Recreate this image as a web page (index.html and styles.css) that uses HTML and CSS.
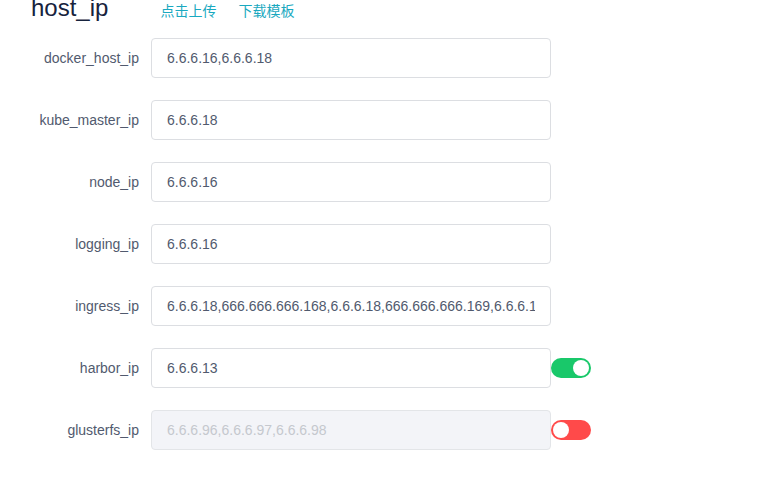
FILE: index.html
```html
<!DOCTYPE html>
<html lang="zh">
<head>
<meta charset="utf-8">
<title>host_ip</title>
<link rel="stylesheet" href="styles.css">
</head>
<body>
<div class="page">
  <div class="header">
    <h2 class="title">host_ip</h2>
    <div class="links">
      <a class="link" href="#">点击上传</a>
      <a class="link" href="#">下载模板</a>
    </div>
  </div>
  <form class="form">
    <div class="row">
      <label class="label">docker_host_ip</label>
      <input class="input" type="text" value="6.6.6.16,6.6.6.18">
    </div>
    <div class="row">
      <label class="label">kube_master_ip</label>
      <input class="input" type="text" value="6.6.6.18">
    </div>
    <div class="row">
      <label class="label">node_ip</label>
      <input class="input" type="text" value="6.6.6.16">
    </div>
    <div class="row">
      <label class="label">logging_ip</label>
      <input class="input" type="text" value="6.6.6.16">
    </div>
    <div class="row">
      <label class="label">ingress_ip</label>
      <input class="input" type="text" value="6.6.6.18,666.666.666.168,6.6.6.18,666.666.666.169,6.6.6.18">
    </div>
    <div class="row">
      <label class="label">harbor_ip</label>
      <input class="input" type="text" value="6.6.6.13">
      <span class="switch switch-on"><span class="knob"></span></span>
    </div>
    <div class="row">
      <label class="label">glusterfs_ip</label>
      <input class="input" type="text" value="6.6.6.96,6.6.6.97,6.6.6.98" disabled>
      <span class="switch switch-off"><span class="knob"></span></span>
    </div>
  </form>
</div>
</body>
</html>
```
FILE: styles.css
```css
* { box-sizing: border-box; }
html, body {
  margin: 0;
  padding: 0;
  background: #fff;
  font-family: "Liberation Sans", Arial, "Noto Sans CJK SC", sans-serif;
  overflow: hidden;
}
.page {
  width: 772px;
  height: 483px;
}
.header {
  display: flex;
  align-items: baseline;
  height: 38px;
  padding-left: 31px;
  margin-top: -4px;
  margin-bottom: 4px;
}
.title {
  margin: 0;
  font-size: 24px;
  line-height: 24px;
  font-weight: normal;
  color: #17233d;
}
.links {
  display: flex;
  gap: 22px;
  margin-left: 52px;
}
.link {
  font-size: 14px;
  color: #1aa9c0;
  text-decoration: none;
  font-family: "Noto Sans CJK SC", sans-serif;
  line-height: 20px;
}
.form {
  display: flex;
  flex-direction: column;
  gap: 22px;
}
.row {
  display: flex;
  align-items: center;
  height: 40px;
}
.label {
  width: 151px;
  padding-right: 12px;
  text-align: right;
  font-size: 14px;
  color: #515a6e;
}
.input {
  width: 400px;
  height: 40px;
  border: 1px solid #dcdee2;
  border-radius: 4px;
  padding: 0 15px;
  font-family: "Liberation Sans", Arial, sans-serif;
  font-size: 14px;
  color: #515a6e;
  background: #fff;
  outline: none;
  margin: 0;
}
.input:disabled {
  background: #f3f4f8;
  color: #c5c8ce;
  border-color: #e3e5e8;
}
.switch {
  display: flex;
  align-items: center;
  width: 40px;
  height: 20px;
  border-radius: 10px;
  padding: 2px;
}
.switch-on {
  background: #19c86a;
  justify-content: flex-end;
}
.switch-off {
  background: #ff4a4a;
  justify-content: flex-start;
}
.knob {
  width: 16px;
  height: 16px;
  border-radius: 50%;
  background: #fff;
}
```
